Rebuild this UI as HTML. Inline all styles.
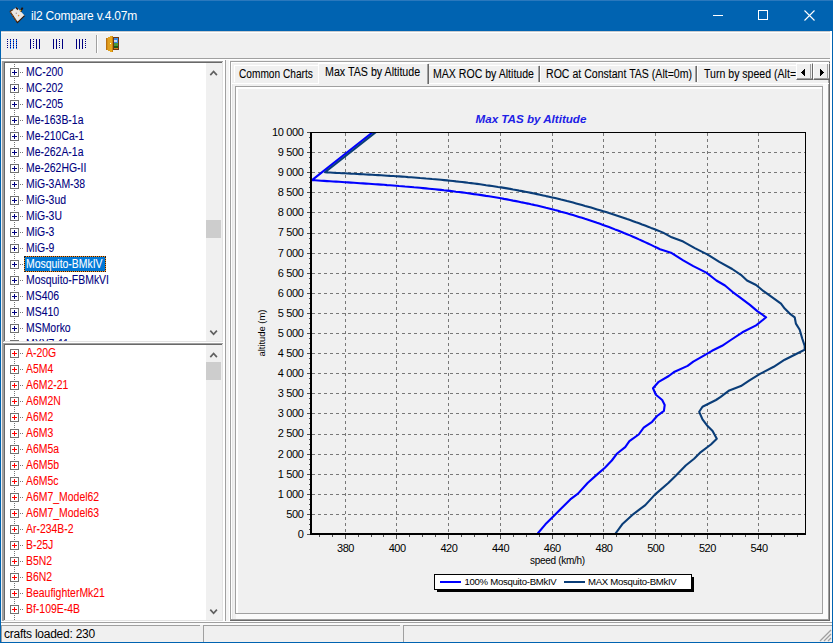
<!DOCTYPE html>
<html><head><meta charset="utf-8"><style>
html,body{margin:0;padding:0;}
body{width:833px;height:643px;overflow:hidden;background:#f0f0f0;position:relative;font-family:"Liberation Sans", sans-serif;}
div,svg{position:absolute;}
svg text{font-family:"Liberation Sans", sans-serif;}
</style></head><body>
<div style="left:0px;top:0px;width:833px;height:31px;background:#0063b1;"></div><div style="left:0px;top:0px;width:833px;height:1px;background:#2a78bd;"></div><div style="left:0px;top:31px;width:1px;height:612px;background:#0063b1;"></div><div style="left:832px;top:31px;width:1px;height:612px;background:#0063b1;"></div><div style="left:0px;top:642px;width:833px;height:1px;background:#0063b1;"></div><svg style="left:0;top:0" width="31" height="31" viewBox="0 0 31 31">
<polygon points="10,11.5 16.8,7.2 24.6,15.6 17.4,22.6" fill="#ebe7e3"/>
<polyline points="24.6,15.6 17.4,22.6 10,11.5" fill="none" stroke="#3a1a06" stroke-width="1.3"/>
<line x1="10.3" y1="12" x2="17" y2="21.8" stroke="#c87a30" stroke-width="1" stroke-dasharray="1 1"/>
<polyline points="10,11.5 13,9.4" fill="none" stroke="#5a3010" stroke-width="1.2"/>
<line x1="16" y1="7.5" x2="18" y2="9.6" stroke="#2a1004" stroke-width="1.6"/>
<line x1="20.6" y1="11.5" x2="22.6" y2="7.6" stroke="#2a1004" stroke-width="1.8"/>
<circle cx="20.5" cy="10.6" r="0.9" fill="#e8b030"/>
<circle cx="18.6" cy="15.6" r="0.8" fill="#e08a30"/>
<circle cx="16.3" cy="13.2" r="0.7" fill="#a09090"/>
</svg><div style="left:31px;top:10.14px;font-size:12px;line-height:12px;color:#fff;letter-spacing:-0.2px;font-weight:normal;font-style:normal;white-space:pre;">il2 Compare v.4.07m</div><div style="left:713px;top:15px;width:10px;height:1px;background:#fff;"></div><div style="left:758px;top:10px;width:8px;height:8px;border:1px solid #fff"></div><svg style="left:804px;top:10px" width="11" height="11" viewBox="0 0 11 11">
<path d="M0.5 0.5 L10.5 10.5 M10.5 0.5 L0.5 10.5" stroke="#fff" stroke-width="1.1"/></svg><div style="left:1px;top:31px;width:831px;height:1px;background:#c8ccd0;"></div><div style="left:1px;top:32px;width:831px;height:1px;background:#ffffff;"></div><div style="left:1px;top:58px;width:831px;height:1px;background:#a0a0a0;"></div><div style="left:1px;top:60px;width:224px;height:1px;background:#ffffff;"></div><div style="left:1px;top:59px;width:831px;height:1px;background:#ffffff;"></div><div style="left:7px;top:39px;width:1px;height:1px;background:#000080;"></div><div style="left:7px;top:41px;width:1px;height:1px;background:#000080;"></div><div style="left:7px;top:43px;width:1px;height:1px;background:#000080;"></div><div style="left:7px;top:45px;width:1px;height:1px;background:#000080;"></div><div style="left:7px;top:47px;width:1px;height:1px;background:#000080;"></div><div style="left:10px;top:39px;width:1px;height:1px;background:#000080;"></div><div style="left:10px;top:40px;width:1px;height:1px;background:#1e90ff;"></div><div style="left:10px;top:41px;width:1px;height:1px;background:#000080;"></div><div style="left:10px;top:42px;width:1px;height:1px;background:#1e90ff;"></div><div style="left:10px;top:43px;width:1px;height:1px;background:#000080;"></div><div style="left:10px;top:44px;width:1px;height:1px;background:#1e90ff;"></div><div style="left:10px;top:45px;width:1px;height:1px;background:#000080;"></div><div style="left:10px;top:46px;width:1px;height:1px;background:#1e90ff;"></div><div style="left:10px;top:47px;width:1px;height:1px;background:#000080;"></div><div style="left:10px;top:48px;width:1px;height:1px;background:#1e90ff;"></div><div style="left:13px;top:39px;width:1px;height:1px;background:#000080;"></div><div style="left:13px;top:40px;width:1px;height:1px;background:#1e90ff;"></div><div style="left:13px;top:41px;width:1px;height:1px;background:#000080;"></div><div style="left:13px;top:42px;width:1px;height:1px;background:#1e90ff;"></div><div style="left:13px;top:43px;width:1px;height:1px;background:#000080;"></div><div style="left:13px;top:44px;width:1px;height:1px;background:#1e90ff;"></div><div style="left:13px;top:45px;width:1px;height:1px;background:#000080;"></div><div style="left:13px;top:46px;width:1px;height:1px;background:#1e90ff;"></div><div style="left:13px;top:47px;width:1px;height:1px;background:#000080;"></div><div style="left:13px;top:48px;width:1px;height:1px;background:#1e90ff;"></div><div style="left:16px;top:39px;width:1px;height:1px;background:#000080;"></div><div style="left:16px;top:40px;width:1px;height:1px;background:#1e90ff;"></div><div style="left:16px;top:41px;width:1px;height:1px;background:#000080;"></div><div style="left:16px;top:42px;width:1px;height:1px;background:#1e90ff;"></div><div style="left:16px;top:43px;width:1px;height:1px;background:#000080;"></div><div style="left:16px;top:44px;width:1px;height:1px;background:#1e90ff;"></div><div style="left:16px;top:45px;width:1px;height:1px;background:#000080;"></div><div style="left:16px;top:46px;width:1px;height:1px;background:#1e90ff;"></div><div style="left:16px;top:47px;width:1px;height:1px;background:#000080;"></div><div style="left:16px;top:48px;width:1px;height:1px;background:#1e90ff;"></div><div style="left:30px;top:39px;width:1px;height:10px;background:#000080;"></div><div style="left:33px;top:39px;width:1px;height:1px;background:#000080;"></div><div style="left:33px;top:41px;width:1px;height:1px;background:#000080;"></div><div style="left:33px;top:43px;width:1px;height:1px;background:#000080;"></div><div style="left:33px;top:45px;width:1px;height:1px;background:#000080;"></div><div style="left:33px;top:47px;width:1px;height:1px;background:#000080;"></div><div style="left:36px;top:39px;width:1px;height:10px;background:#000080;"></div><div style="left:39px;top:39px;width:1px;height:10px;background:#000080;"></div><div style="left:53px;top:39px;width:1px;height:10px;background:#000080;"></div><div style="left:56px;top:39px;width:1px;height:10px;background:#000080;"></div><div style="left:59px;top:39px;width:1px;height:1px;background:#000080;"></div><div style="left:59px;top:41px;width:1px;height:1px;background:#000080;"></div><div style="left:59px;top:43px;width:1px;height:1px;background:#000080;"></div><div style="left:59px;top:45px;width:1px;height:1px;background:#000080;"></div><div style="left:59px;top:47px;width:1px;height:1px;background:#000080;"></div><div style="left:62px;top:39px;width:1px;height:10px;background:#000080;"></div><div style="left:76px;top:39px;width:1px;height:10px;background:#000080;"></div><div style="left:79px;top:39px;width:1px;height:10px;background:#000080;"></div><div style="left:82px;top:39px;width:1px;height:10px;background:#000080;"></div><div style="left:85px;top:39px;width:1px;height:1px;background:#000080;"></div><div style="left:85px;top:41px;width:1px;height:1px;background:#000080;"></div><div style="left:85px;top:43px;width:1px;height:1px;background:#000080;"></div><div style="left:85px;top:45px;width:1px;height:1px;background:#000080;"></div><div style="left:85px;top:47px;width:1px;height:1px;background:#000080;"></div><div style="left:96px;top:35px;width:1px;height:18px;background:#a0a0a0;"></div><div style="left:97px;top:35px;width:1px;height:18px;background:#ffffff;"></div><svg style="left:100px;top:32px" width="25" height="24" viewBox="0 0 25 24" shape-rendering="crispEdges">
<rect x="13" y="5" width="6" height="13" fill="#6e3812"/>
<rect x="14" y="6" width="4" height="5" fill="#3a88e8"/>
<rect x="14" y="8" width="3" height="2" fill="#c8dcf0"/>
<rect x="14" y="11" width="4" height="3" fill="#4a9a3a"/>
<rect x="14" y="14" width="4" height="2" fill="#1e5a18"/>
<rect x="14" y="16" width="4" height="1" fill="#d08020"/>
<rect x="6" y="6" width="2" height="12" fill="#d89018"/>
<rect x="8" y="5" width="2" height="14" fill="#e0a020"/>
<rect x="10" y="4" width="3" height="16" fill="#e8a81c"/>
<rect x="6" y="6" width="1" height="12" fill="#b87010"/>
<rect x="12" y="4" width="1" height="16" fill="#c88010"/>
<rect x="10" y="11" width="1" height="1" fill="#fff"/>
</svg><div style="left:225px;top:60px;width:1px;height:563px;background:#a0a0a0;"></div><div style="left:226px;top:60px;width:3px;height:563px;background:#f5f5f5;"></div><div style="left:229px;top:60px;width:1px;height:563px;background:#ffffff;"></div><div style="left:2px;top:61px;width:1px;height:282px;background:#a0a0a0;"></div><div style="left:3px;top:61px;width:222px;height:282px;background:#ffffff;"></div><div style="left:3px;top:61px;width:221px;height:1px;background:#a0a0a0;"></div><div style="left:3px;top:61px;width:1px;height:282px;background:#a0a0a0;"></div><div style="left:4px;top:62px;width:219px;height:1px;background:#696969;"></div><div style="left:4px;top:62px;width:1px;height:280px;background:#696969;"></div><div style="left:3px;top:342px;width:221px;height:1px;background:#ffffff;"></div><div style="left:223px;top:61px;width:1px;height:282px;background:#ffffff;"></div><div style="left:4px;top:341px;width:219px;height:1px;background:#e3e3e3;"></div><div style="left:222px;top:62px;width:1px;height:280px;background:#e3e3e3;"></div><div style="left:5px;top:63px;width:217px;height:278px;overflow:hidden;background:#fff"><div style="left:9px;top:1px;width:1px;height:1px;background:#767676;"></div><div style="left:9px;top:3px;width:1px;height:1px;background:#767676;"></div><div style="left:9px;top:5px;width:1px;height:1px;background:#767676;"></div><div style="left:9px;top:7px;width:1px;height:1px;background:#767676;"></div><div style="left:9px;top:9px;width:1px;height:1px;background:#767676;"></div><div style="left:9px;top:11px;width:1px;height:1px;background:#767676;"></div><div style="left:9px;top:13px;width:1px;height:1px;background:#767676;"></div><div style="left:9px;top:15px;width:1px;height:1px;background:#767676;"></div><div style="left:9px;top:17px;width:1px;height:1px;background:#767676;"></div><div style="left:9px;top:19px;width:1px;height:1px;background:#767676;"></div><div style="left:9px;top:21px;width:1px;height:1px;background:#767676;"></div><div style="left:9px;top:23px;width:1px;height:1px;background:#767676;"></div><div style="left:9px;top:25px;width:1px;height:1px;background:#767676;"></div><div style="left:9px;top:27px;width:1px;height:1px;background:#767676;"></div><div style="left:9px;top:29px;width:1px;height:1px;background:#767676;"></div><div style="left:9px;top:31px;width:1px;height:1px;background:#767676;"></div><div style="left:9px;top:33px;width:1px;height:1px;background:#767676;"></div><div style="left:9px;top:35px;width:1px;height:1px;background:#767676;"></div><div style="left:9px;top:37px;width:1px;height:1px;background:#767676;"></div><div style="left:9px;top:39px;width:1px;height:1px;background:#767676;"></div><div style="left:9px;top:41px;width:1px;height:1px;background:#767676;"></div><div style="left:9px;top:43px;width:1px;height:1px;background:#767676;"></div><div style="left:9px;top:45px;width:1px;height:1px;background:#767676;"></div><div style="left:9px;top:47px;width:1px;height:1px;background:#767676;"></div><div style="left:9px;top:49px;width:1px;height:1px;background:#767676;"></div><div style="left:9px;top:51px;width:1px;height:1px;background:#767676;"></div><div style="left:9px;top:53px;width:1px;height:1px;background:#767676;"></div><div style="left:9px;top:55px;width:1px;height:1px;background:#767676;"></div><div style="left:9px;top:57px;width:1px;height:1px;background:#767676;"></div><div style="left:9px;top:59px;width:1px;height:1px;background:#767676;"></div><div style="left:9px;top:61px;width:1px;height:1px;background:#767676;"></div><div style="left:9px;top:63px;width:1px;height:1px;background:#767676;"></div><div style="left:9px;top:65px;width:1px;height:1px;background:#767676;"></div><div style="left:9px;top:67px;width:1px;height:1px;background:#767676;"></div><div style="left:9px;top:69px;width:1px;height:1px;background:#767676;"></div><div style="left:9px;top:71px;width:1px;height:1px;background:#767676;"></div><div style="left:9px;top:73px;width:1px;height:1px;background:#767676;"></div><div style="left:9px;top:75px;width:1px;height:1px;background:#767676;"></div><div style="left:9px;top:77px;width:1px;height:1px;background:#767676;"></div><div style="left:9px;top:79px;width:1px;height:1px;background:#767676;"></div><div style="left:9px;top:81px;width:1px;height:1px;background:#767676;"></div><div style="left:9px;top:83px;width:1px;height:1px;background:#767676;"></div><div style="left:9px;top:85px;width:1px;height:1px;background:#767676;"></div><div style="left:9px;top:87px;width:1px;height:1px;background:#767676;"></div><div style="left:9px;top:89px;width:1px;height:1px;background:#767676;"></div><div style="left:9px;top:91px;width:1px;height:1px;background:#767676;"></div><div style="left:9px;top:93px;width:1px;height:1px;background:#767676;"></div><div style="left:9px;top:95px;width:1px;height:1px;background:#767676;"></div><div style="left:9px;top:97px;width:1px;height:1px;background:#767676;"></div><div style="left:9px;top:99px;width:1px;height:1px;background:#767676;"></div><div style="left:9px;top:101px;width:1px;height:1px;background:#767676;"></div><div style="left:9px;top:103px;width:1px;height:1px;background:#767676;"></div><div style="left:9px;top:105px;width:1px;height:1px;background:#767676;"></div><div style="left:9px;top:107px;width:1px;height:1px;background:#767676;"></div><div style="left:9px;top:109px;width:1px;height:1px;background:#767676;"></div><div style="left:9px;top:111px;width:1px;height:1px;background:#767676;"></div><div style="left:9px;top:113px;width:1px;height:1px;background:#767676;"></div><div style="left:9px;top:115px;width:1px;height:1px;background:#767676;"></div><div style="left:9px;top:117px;width:1px;height:1px;background:#767676;"></div><div style="left:9px;top:119px;width:1px;height:1px;background:#767676;"></div><div style="left:9px;top:121px;width:1px;height:1px;background:#767676;"></div><div style="left:9px;top:123px;width:1px;height:1px;background:#767676;"></div><div style="left:9px;top:125px;width:1px;height:1px;background:#767676;"></div><div style="left:9px;top:127px;width:1px;height:1px;background:#767676;"></div><div style="left:9px;top:129px;width:1px;height:1px;background:#767676;"></div><div style="left:9px;top:131px;width:1px;height:1px;background:#767676;"></div><div style="left:9px;top:133px;width:1px;height:1px;background:#767676;"></div><div style="left:9px;top:135px;width:1px;height:1px;background:#767676;"></div><div style="left:9px;top:137px;width:1px;height:1px;background:#767676;"></div><div style="left:9px;top:139px;width:1px;height:1px;background:#767676;"></div><div style="left:9px;top:141px;width:1px;height:1px;background:#767676;"></div><div style="left:9px;top:143px;width:1px;height:1px;background:#767676;"></div><div style="left:9px;top:145px;width:1px;height:1px;background:#767676;"></div><div style="left:9px;top:147px;width:1px;height:1px;background:#767676;"></div><div style="left:9px;top:149px;width:1px;height:1px;background:#767676;"></div><div style="left:9px;top:151px;width:1px;height:1px;background:#767676;"></div><div style="left:9px;top:153px;width:1px;height:1px;background:#767676;"></div><div style="left:9px;top:155px;width:1px;height:1px;background:#767676;"></div><div style="left:9px;top:157px;width:1px;height:1px;background:#767676;"></div><div style="left:9px;top:159px;width:1px;height:1px;background:#767676;"></div><div style="left:9px;top:161px;width:1px;height:1px;background:#767676;"></div><div style="left:9px;top:163px;width:1px;height:1px;background:#767676;"></div><div style="left:9px;top:165px;width:1px;height:1px;background:#767676;"></div><div style="left:9px;top:167px;width:1px;height:1px;background:#767676;"></div><div style="left:9px;top:169px;width:1px;height:1px;background:#767676;"></div><div style="left:9px;top:171px;width:1px;height:1px;background:#767676;"></div><div style="left:9px;top:173px;width:1px;height:1px;background:#767676;"></div><div style="left:9px;top:175px;width:1px;height:1px;background:#767676;"></div><div style="left:9px;top:177px;width:1px;height:1px;background:#767676;"></div><div style="left:9px;top:179px;width:1px;height:1px;background:#767676;"></div><div style="left:9px;top:181px;width:1px;height:1px;background:#767676;"></div><div style="left:9px;top:183px;width:1px;height:1px;background:#767676;"></div><div style="left:9px;top:185px;width:1px;height:1px;background:#767676;"></div><div style="left:9px;top:187px;width:1px;height:1px;background:#767676;"></div><div style="left:9px;top:189px;width:1px;height:1px;background:#767676;"></div><div style="left:9px;top:191px;width:1px;height:1px;background:#767676;"></div><div style="left:9px;top:193px;width:1px;height:1px;background:#767676;"></div><div style="left:9px;top:195px;width:1px;height:1px;background:#767676;"></div><div style="left:9px;top:197px;width:1px;height:1px;background:#767676;"></div><div style="left:9px;top:199px;width:1px;height:1px;background:#767676;"></div><div style="left:9px;top:201px;width:1px;height:1px;background:#767676;"></div><div style="left:9px;top:203px;width:1px;height:1px;background:#767676;"></div><div style="left:9px;top:205px;width:1px;height:1px;background:#767676;"></div><div style="left:9px;top:207px;width:1px;height:1px;background:#767676;"></div><div style="left:9px;top:209px;width:1px;height:1px;background:#767676;"></div><div style="left:9px;top:211px;width:1px;height:1px;background:#767676;"></div><div style="left:9px;top:213px;width:1px;height:1px;background:#767676;"></div><div style="left:9px;top:215px;width:1px;height:1px;background:#767676;"></div><div style="left:9px;top:217px;width:1px;height:1px;background:#767676;"></div><div style="left:9px;top:219px;width:1px;height:1px;background:#767676;"></div><div style="left:9px;top:221px;width:1px;height:1px;background:#767676;"></div><div style="left:9px;top:223px;width:1px;height:1px;background:#767676;"></div><div style="left:9px;top:225px;width:1px;height:1px;background:#767676;"></div><div style="left:9px;top:227px;width:1px;height:1px;background:#767676;"></div><div style="left:9px;top:229px;width:1px;height:1px;background:#767676;"></div><div style="left:9px;top:231px;width:1px;height:1px;background:#767676;"></div><div style="left:9px;top:233px;width:1px;height:1px;background:#767676;"></div><div style="left:9px;top:235px;width:1px;height:1px;background:#767676;"></div><div style="left:9px;top:237px;width:1px;height:1px;background:#767676;"></div><div style="left:9px;top:239px;width:1px;height:1px;background:#767676;"></div><div style="left:9px;top:241px;width:1px;height:1px;background:#767676;"></div><div style="left:9px;top:243px;width:1px;height:1px;background:#767676;"></div><div style="left:9px;top:245px;width:1px;height:1px;background:#767676;"></div><div style="left:9px;top:247px;width:1px;height:1px;background:#767676;"></div><div style="left:9px;top:249px;width:1px;height:1px;background:#767676;"></div><div style="left:9px;top:251px;width:1px;height:1px;background:#767676;"></div><div style="left:9px;top:253px;width:1px;height:1px;background:#767676;"></div><div style="left:9px;top:255px;width:1px;height:1px;background:#767676;"></div><div style="left:9px;top:257px;width:1px;height:1px;background:#767676;"></div><div style="left:9px;top:259px;width:1px;height:1px;background:#767676;"></div><div style="left:9px;top:261px;width:1px;height:1px;background:#767676;"></div><div style="left:9px;top:263px;width:1px;height:1px;background:#767676;"></div><div style="left:9px;top:265px;width:1px;height:1px;background:#767676;"></div><div style="left:9px;top:267px;width:1px;height:1px;background:#767676;"></div><div style="left:9px;top:269px;width:1px;height:1px;background:#767676;"></div><div style="left:9px;top:271px;width:1px;height:1px;background:#767676;"></div><div style="left:9px;top:273px;width:1px;height:1px;background:#767676;"></div><div style="left:9px;top:275px;width:1px;height:1px;background:#767676;"></div><div style="left:9px;top:277px;width:1px;height:1px;background:#767676;"></div><div style="left:15px;top:9px;width:1px;height:1px;background:#767676;"></div><div style="left:17px;top:9px;width:1px;height:1px;background:#767676;"></div><div style="left:5px;top:5px;width:9px;height:9px;background:#fff;box-sizing:border-box;border:1px solid #727272"></div><div style="left:7px;top:9px;width:5px;height:1px;background:#000080;"></div><div style="left:9px;top:7px;width:1px;height:5px;background:#000080;"></div><div style="left:21px;top:2.84px;font-size:12px;line-height:12px;color:#000080;letter-spacing:0px;white-space:pre;transform:scaleX(0.87);transform-origin:0 0;-webkit-text-stroke:0.08px #000080">MC-200</div><div style="left:15px;top:25px;width:1px;height:1px;background:#767676;"></div><div style="left:17px;top:25px;width:1px;height:1px;background:#767676;"></div><div style="left:5px;top:21px;width:9px;height:9px;background:#fff;box-sizing:border-box;border:1px solid #727272"></div><div style="left:7px;top:25px;width:5px;height:1px;background:#000080;"></div><div style="left:9px;top:23px;width:1px;height:5px;background:#000080;"></div><div style="left:21px;top:18.84px;font-size:12px;line-height:12px;color:#000080;letter-spacing:0px;white-space:pre;transform:scaleX(0.87);transform-origin:0 0;-webkit-text-stroke:0.08px #000080">MC-202</div><div style="left:15px;top:41px;width:1px;height:1px;background:#767676;"></div><div style="left:17px;top:41px;width:1px;height:1px;background:#767676;"></div><div style="left:5px;top:37px;width:9px;height:9px;background:#fff;box-sizing:border-box;border:1px solid #727272"></div><div style="left:7px;top:41px;width:5px;height:1px;background:#000080;"></div><div style="left:9px;top:39px;width:1px;height:5px;background:#000080;"></div><div style="left:21px;top:34.84px;font-size:12px;line-height:12px;color:#000080;letter-spacing:0px;white-space:pre;transform:scaleX(0.87);transform-origin:0 0;-webkit-text-stroke:0.08px #000080">MC-205</div><div style="left:15px;top:57px;width:1px;height:1px;background:#767676;"></div><div style="left:17px;top:57px;width:1px;height:1px;background:#767676;"></div><div style="left:5px;top:53px;width:9px;height:9px;background:#fff;box-sizing:border-box;border:1px solid #727272"></div><div style="left:7px;top:57px;width:5px;height:1px;background:#000080;"></div><div style="left:9px;top:55px;width:1px;height:5px;background:#000080;"></div><div style="left:21px;top:50.84px;font-size:12px;line-height:12px;color:#000080;letter-spacing:0px;white-space:pre;transform:scaleX(0.87);transform-origin:0 0;-webkit-text-stroke:0.08px #000080">Me-163B-1a</div><div style="left:15px;top:73px;width:1px;height:1px;background:#767676;"></div><div style="left:17px;top:73px;width:1px;height:1px;background:#767676;"></div><div style="left:5px;top:69px;width:9px;height:9px;background:#fff;box-sizing:border-box;border:1px solid #727272"></div><div style="left:7px;top:73px;width:5px;height:1px;background:#000080;"></div><div style="left:9px;top:71px;width:1px;height:5px;background:#000080;"></div><div style="left:21px;top:66.84px;font-size:12px;line-height:12px;color:#000080;letter-spacing:0px;white-space:pre;transform:scaleX(0.87);transform-origin:0 0;-webkit-text-stroke:0.08px #000080">Me-210Ca-1</div><div style="left:15px;top:89px;width:1px;height:1px;background:#767676;"></div><div style="left:17px;top:89px;width:1px;height:1px;background:#767676;"></div><div style="left:5px;top:85px;width:9px;height:9px;background:#fff;box-sizing:border-box;border:1px solid #727272"></div><div style="left:7px;top:89px;width:5px;height:1px;background:#000080;"></div><div style="left:9px;top:87px;width:1px;height:5px;background:#000080;"></div><div style="left:21px;top:82.84px;font-size:12px;line-height:12px;color:#000080;letter-spacing:0px;white-space:pre;transform:scaleX(0.87);transform-origin:0 0;-webkit-text-stroke:0.08px #000080">Me-262A-1a</div><div style="left:15px;top:105px;width:1px;height:1px;background:#767676;"></div><div style="left:17px;top:105px;width:1px;height:1px;background:#767676;"></div><div style="left:5px;top:101px;width:9px;height:9px;background:#fff;box-sizing:border-box;border:1px solid #727272"></div><div style="left:7px;top:105px;width:5px;height:1px;background:#000080;"></div><div style="left:9px;top:103px;width:1px;height:5px;background:#000080;"></div><div style="left:21px;top:98.84px;font-size:12px;line-height:12px;color:#000080;letter-spacing:0px;white-space:pre;transform:scaleX(0.87);transform-origin:0 0;-webkit-text-stroke:0.08px #000080">Me-262HG-II</div><div style="left:15px;top:121px;width:1px;height:1px;background:#767676;"></div><div style="left:17px;top:121px;width:1px;height:1px;background:#767676;"></div><div style="left:5px;top:117px;width:9px;height:9px;background:#fff;box-sizing:border-box;border:1px solid #727272"></div><div style="left:7px;top:121px;width:5px;height:1px;background:#000080;"></div><div style="left:9px;top:119px;width:1px;height:5px;background:#000080;"></div><div style="left:21px;top:114.84px;font-size:12px;line-height:12px;color:#000080;letter-spacing:0px;white-space:pre;transform:scaleX(0.87);transform-origin:0 0;-webkit-text-stroke:0.08px #000080">MiG-3AM-38</div><div style="left:15px;top:137px;width:1px;height:1px;background:#767676;"></div><div style="left:17px;top:137px;width:1px;height:1px;background:#767676;"></div><div style="left:5px;top:133px;width:9px;height:9px;background:#fff;box-sizing:border-box;border:1px solid #727272"></div><div style="left:7px;top:137px;width:5px;height:1px;background:#000080;"></div><div style="left:9px;top:135px;width:1px;height:5px;background:#000080;"></div><div style="left:21px;top:130.84px;font-size:12px;line-height:12px;color:#000080;letter-spacing:0px;white-space:pre;transform:scaleX(0.87);transform-origin:0 0;-webkit-text-stroke:0.08px #000080">MiG-3ud</div><div style="left:15px;top:153px;width:1px;height:1px;background:#767676;"></div><div style="left:17px;top:153px;width:1px;height:1px;background:#767676;"></div><div style="left:5px;top:149px;width:9px;height:9px;background:#fff;box-sizing:border-box;border:1px solid #727272"></div><div style="left:7px;top:153px;width:5px;height:1px;background:#000080;"></div><div style="left:9px;top:151px;width:1px;height:5px;background:#000080;"></div><div style="left:21px;top:146.84px;font-size:12px;line-height:12px;color:#000080;letter-spacing:0px;white-space:pre;transform:scaleX(0.87);transform-origin:0 0;-webkit-text-stroke:0.08px #000080">MiG-3U</div><div style="left:15px;top:169px;width:1px;height:1px;background:#767676;"></div><div style="left:17px;top:169px;width:1px;height:1px;background:#767676;"></div><div style="left:5px;top:165px;width:9px;height:9px;background:#fff;box-sizing:border-box;border:1px solid #727272"></div><div style="left:7px;top:169px;width:5px;height:1px;background:#000080;"></div><div style="left:9px;top:167px;width:1px;height:5px;background:#000080;"></div><div style="left:21px;top:162.84px;font-size:12px;line-height:12px;color:#000080;letter-spacing:0px;white-space:pre;transform:scaleX(0.87);transform-origin:0 0;-webkit-text-stroke:0.08px #000080">MiG-3</div><div style="left:15px;top:185px;width:1px;height:1px;background:#767676;"></div><div style="left:17px;top:185px;width:1px;height:1px;background:#767676;"></div><div style="left:5px;top:181px;width:9px;height:9px;background:#fff;box-sizing:border-box;border:1px solid #727272"></div><div style="left:7px;top:185px;width:5px;height:1px;background:#000080;"></div><div style="left:9px;top:183px;width:1px;height:5px;background:#000080;"></div><div style="left:21px;top:178.84px;font-size:12px;line-height:12px;color:#000080;letter-spacing:0px;white-space:pre;transform:scaleX(0.87);transform-origin:0 0;-webkit-text-stroke:0.08px #000080">MiG-9</div><div style="left:15px;top:201px;width:1px;height:1px;background:#767676;"></div><div style="left:17px;top:201px;width:1px;height:1px;background:#767676;"></div><div style="left:5px;top:197px;width:9px;height:9px;background:#fff;box-sizing:border-box;border:1px solid #727272"></div><div style="left:7px;top:201px;width:5px;height:1px;background:#000080;"></div><div style="left:9px;top:199px;width:1px;height:5px;background:#000080;"></div><div style="left:19px;top:193px;width:82px;height:16px;background:#ff9020;box-sizing:border-box;border:1px dotted #202020"></div><div style="left:20px;top:194px;width:80px;height:14px;background:#0078d7;"></div><div style="left:21px;top:194.84px;font-size:12px;line-height:12px;color:#fff;letter-spacing:0px;white-space:pre;transform:scaleX(0.87);transform-origin:0 0;-webkit-text-stroke:0.08px #fff">Mosquito-BMkIV</div><div style="left:15px;top:217px;width:1px;height:1px;background:#767676;"></div><div style="left:17px;top:217px;width:1px;height:1px;background:#767676;"></div><div style="left:5px;top:213px;width:9px;height:9px;background:#fff;box-sizing:border-box;border:1px solid #727272"></div><div style="left:7px;top:217px;width:5px;height:1px;background:#000080;"></div><div style="left:9px;top:215px;width:1px;height:5px;background:#000080;"></div><div style="left:21px;top:210.84px;font-size:12px;line-height:12px;color:#000080;letter-spacing:0px;white-space:pre;transform:scaleX(0.87);transform-origin:0 0;-webkit-text-stroke:0.08px #000080">Mosquito-FBMkVI</div><div style="left:15px;top:233px;width:1px;height:1px;background:#767676;"></div><div style="left:17px;top:233px;width:1px;height:1px;background:#767676;"></div><div style="left:5px;top:229px;width:9px;height:9px;background:#fff;box-sizing:border-box;border:1px solid #727272"></div><div style="left:7px;top:233px;width:5px;height:1px;background:#000080;"></div><div style="left:9px;top:231px;width:1px;height:5px;background:#000080;"></div><div style="left:21px;top:226.84px;font-size:12px;line-height:12px;color:#000080;letter-spacing:0px;white-space:pre;transform:scaleX(0.87);transform-origin:0 0;-webkit-text-stroke:0.08px #000080">MS406</div><div style="left:15px;top:249px;width:1px;height:1px;background:#767676;"></div><div style="left:17px;top:249px;width:1px;height:1px;background:#767676;"></div><div style="left:5px;top:245px;width:9px;height:9px;background:#fff;box-sizing:border-box;border:1px solid #727272"></div><div style="left:7px;top:249px;width:5px;height:1px;background:#000080;"></div><div style="left:9px;top:247px;width:1px;height:5px;background:#000080;"></div><div style="left:21px;top:242.84px;font-size:12px;line-height:12px;color:#000080;letter-spacing:0px;white-space:pre;transform:scaleX(0.87);transform-origin:0 0;-webkit-text-stroke:0.08px #000080">MS410</div><div style="left:15px;top:265px;width:1px;height:1px;background:#767676;"></div><div style="left:17px;top:265px;width:1px;height:1px;background:#767676;"></div><div style="left:5px;top:261px;width:9px;height:9px;background:#fff;box-sizing:border-box;border:1px solid #727272"></div><div style="left:7px;top:265px;width:5px;height:1px;background:#000080;"></div><div style="left:9px;top:263px;width:1px;height:5px;background:#000080;"></div><div style="left:21px;top:258.84px;font-size:12px;line-height:12px;color:#000080;letter-spacing:0px;white-space:pre;transform:scaleX(0.87);transform-origin:0 0;-webkit-text-stroke:0.08px #000080">MSMorko</div><div style="left:15px;top:281px;width:1px;height:1px;background:#767676;"></div><div style="left:17px;top:281px;width:1px;height:1px;background:#767676;"></div><div style="left:5px;top:277px;width:9px;height:9px;background:#fff;box-sizing:border-box;border:1px solid #727272"></div><div style="left:7px;top:281px;width:5px;height:1px;background:#000080;"></div><div style="left:9px;top:279px;width:1px;height:5px;background:#000080;"></div><div style="left:21px;top:274.84px;font-size:12px;line-height:12px;color:#000080;letter-spacing:0px;white-space:pre;transform:scaleX(0.87);transform-origin:0 0;-webkit-text-stroke:0.08px #000080">MXY7-11</div><div style="left:201px;top:0px;width:16px;height:278px;background:#f0f0f0;"></div><div style="left:201px;top:157px;width:15px;height:18px;background:#cdcdcd;"></div></div><svg style="left:0;top:0" width="833" height="643"><path d="M210.3 75.1 L213.6 71.5 L216.9 75.1" fill="none" stroke="#606060" stroke-width="1.7"/><path d="M210.3 330.59999999999997 L213.6 334.2 L216.9 330.59999999999997" fill="none" stroke="#606060" stroke-width="1.7"/></svg><div style="left:2px;top:343px;width:1px;height:279px;background:#a0a0a0;"></div><div style="left:3px;top:343px;width:222px;height:279px;background:#ffffff;"></div><div style="left:3px;top:343px;width:221px;height:1px;background:#a0a0a0;"></div><div style="left:3px;top:343px;width:1px;height:279px;background:#a0a0a0;"></div><div style="left:4px;top:344px;width:219px;height:1px;background:#696969;"></div><div style="left:4px;top:344px;width:1px;height:277px;background:#696969;"></div><div style="left:3px;top:621px;width:221px;height:1px;background:#ffffff;"></div><div style="left:223px;top:343px;width:1px;height:279px;background:#ffffff;"></div><div style="left:4px;top:620px;width:219px;height:1px;background:#e3e3e3;"></div><div style="left:222px;top:344px;width:1px;height:277px;background:#e3e3e3;"></div><div style="left:5px;top:345px;width:217px;height:275px;overflow:hidden;background:#fff"><div style="left:9px;top:4px;width:1px;height:1px;background:#767676;"></div><div style="left:9px;top:6px;width:1px;height:1px;background:#767676;"></div><div style="left:9px;top:8px;width:1px;height:1px;background:#767676;"></div><div style="left:9px;top:10px;width:1px;height:1px;background:#767676;"></div><div style="left:9px;top:12px;width:1px;height:1px;background:#767676;"></div><div style="left:9px;top:14px;width:1px;height:1px;background:#767676;"></div><div style="left:9px;top:16px;width:1px;height:1px;background:#767676;"></div><div style="left:9px;top:18px;width:1px;height:1px;background:#767676;"></div><div style="left:9px;top:20px;width:1px;height:1px;background:#767676;"></div><div style="left:9px;top:22px;width:1px;height:1px;background:#767676;"></div><div style="left:9px;top:24px;width:1px;height:1px;background:#767676;"></div><div style="left:9px;top:26px;width:1px;height:1px;background:#767676;"></div><div style="left:9px;top:28px;width:1px;height:1px;background:#767676;"></div><div style="left:9px;top:30px;width:1px;height:1px;background:#767676;"></div><div style="left:9px;top:32px;width:1px;height:1px;background:#767676;"></div><div style="left:9px;top:34px;width:1px;height:1px;background:#767676;"></div><div style="left:9px;top:36px;width:1px;height:1px;background:#767676;"></div><div style="left:9px;top:38px;width:1px;height:1px;background:#767676;"></div><div style="left:9px;top:40px;width:1px;height:1px;background:#767676;"></div><div style="left:9px;top:42px;width:1px;height:1px;background:#767676;"></div><div style="left:9px;top:44px;width:1px;height:1px;background:#767676;"></div><div style="left:9px;top:46px;width:1px;height:1px;background:#767676;"></div><div style="left:9px;top:48px;width:1px;height:1px;background:#767676;"></div><div style="left:9px;top:50px;width:1px;height:1px;background:#767676;"></div><div style="left:9px;top:52px;width:1px;height:1px;background:#767676;"></div><div style="left:9px;top:54px;width:1px;height:1px;background:#767676;"></div><div style="left:9px;top:56px;width:1px;height:1px;background:#767676;"></div><div style="left:9px;top:58px;width:1px;height:1px;background:#767676;"></div><div style="left:9px;top:60px;width:1px;height:1px;background:#767676;"></div><div style="left:9px;top:62px;width:1px;height:1px;background:#767676;"></div><div style="left:9px;top:64px;width:1px;height:1px;background:#767676;"></div><div style="left:9px;top:66px;width:1px;height:1px;background:#767676;"></div><div style="left:9px;top:68px;width:1px;height:1px;background:#767676;"></div><div style="left:9px;top:70px;width:1px;height:1px;background:#767676;"></div><div style="left:9px;top:72px;width:1px;height:1px;background:#767676;"></div><div style="left:9px;top:74px;width:1px;height:1px;background:#767676;"></div><div style="left:9px;top:76px;width:1px;height:1px;background:#767676;"></div><div style="left:9px;top:78px;width:1px;height:1px;background:#767676;"></div><div style="left:9px;top:80px;width:1px;height:1px;background:#767676;"></div><div style="left:9px;top:82px;width:1px;height:1px;background:#767676;"></div><div style="left:9px;top:84px;width:1px;height:1px;background:#767676;"></div><div style="left:9px;top:86px;width:1px;height:1px;background:#767676;"></div><div style="left:9px;top:88px;width:1px;height:1px;background:#767676;"></div><div style="left:9px;top:90px;width:1px;height:1px;background:#767676;"></div><div style="left:9px;top:92px;width:1px;height:1px;background:#767676;"></div><div style="left:9px;top:94px;width:1px;height:1px;background:#767676;"></div><div style="left:9px;top:96px;width:1px;height:1px;background:#767676;"></div><div style="left:9px;top:98px;width:1px;height:1px;background:#767676;"></div><div style="left:9px;top:100px;width:1px;height:1px;background:#767676;"></div><div style="left:9px;top:102px;width:1px;height:1px;background:#767676;"></div><div style="left:9px;top:104px;width:1px;height:1px;background:#767676;"></div><div style="left:9px;top:106px;width:1px;height:1px;background:#767676;"></div><div style="left:9px;top:108px;width:1px;height:1px;background:#767676;"></div><div style="left:9px;top:110px;width:1px;height:1px;background:#767676;"></div><div style="left:9px;top:112px;width:1px;height:1px;background:#767676;"></div><div style="left:9px;top:114px;width:1px;height:1px;background:#767676;"></div><div style="left:9px;top:116px;width:1px;height:1px;background:#767676;"></div><div style="left:9px;top:118px;width:1px;height:1px;background:#767676;"></div><div style="left:9px;top:120px;width:1px;height:1px;background:#767676;"></div><div style="left:9px;top:122px;width:1px;height:1px;background:#767676;"></div><div style="left:9px;top:124px;width:1px;height:1px;background:#767676;"></div><div style="left:9px;top:126px;width:1px;height:1px;background:#767676;"></div><div style="left:9px;top:128px;width:1px;height:1px;background:#767676;"></div><div style="left:9px;top:130px;width:1px;height:1px;background:#767676;"></div><div style="left:9px;top:132px;width:1px;height:1px;background:#767676;"></div><div style="left:9px;top:134px;width:1px;height:1px;background:#767676;"></div><div style="left:9px;top:136px;width:1px;height:1px;background:#767676;"></div><div style="left:9px;top:138px;width:1px;height:1px;background:#767676;"></div><div style="left:9px;top:140px;width:1px;height:1px;background:#767676;"></div><div style="left:9px;top:142px;width:1px;height:1px;background:#767676;"></div><div style="left:9px;top:144px;width:1px;height:1px;background:#767676;"></div><div style="left:9px;top:146px;width:1px;height:1px;background:#767676;"></div><div style="left:9px;top:148px;width:1px;height:1px;background:#767676;"></div><div style="left:9px;top:150px;width:1px;height:1px;background:#767676;"></div><div style="left:9px;top:152px;width:1px;height:1px;background:#767676;"></div><div style="left:9px;top:154px;width:1px;height:1px;background:#767676;"></div><div style="left:9px;top:156px;width:1px;height:1px;background:#767676;"></div><div style="left:9px;top:158px;width:1px;height:1px;background:#767676;"></div><div style="left:9px;top:160px;width:1px;height:1px;background:#767676;"></div><div style="left:9px;top:162px;width:1px;height:1px;background:#767676;"></div><div style="left:9px;top:164px;width:1px;height:1px;background:#767676;"></div><div style="left:9px;top:166px;width:1px;height:1px;background:#767676;"></div><div style="left:9px;top:168px;width:1px;height:1px;background:#767676;"></div><div style="left:9px;top:170px;width:1px;height:1px;background:#767676;"></div><div style="left:9px;top:172px;width:1px;height:1px;background:#767676;"></div><div style="left:9px;top:174px;width:1px;height:1px;background:#767676;"></div><div style="left:9px;top:176px;width:1px;height:1px;background:#767676;"></div><div style="left:9px;top:178px;width:1px;height:1px;background:#767676;"></div><div style="left:9px;top:180px;width:1px;height:1px;background:#767676;"></div><div style="left:9px;top:182px;width:1px;height:1px;background:#767676;"></div><div style="left:9px;top:184px;width:1px;height:1px;background:#767676;"></div><div style="left:9px;top:186px;width:1px;height:1px;background:#767676;"></div><div style="left:9px;top:188px;width:1px;height:1px;background:#767676;"></div><div style="left:9px;top:190px;width:1px;height:1px;background:#767676;"></div><div style="left:9px;top:192px;width:1px;height:1px;background:#767676;"></div><div style="left:9px;top:194px;width:1px;height:1px;background:#767676;"></div><div style="left:9px;top:196px;width:1px;height:1px;background:#767676;"></div><div style="left:9px;top:198px;width:1px;height:1px;background:#767676;"></div><div style="left:9px;top:200px;width:1px;height:1px;background:#767676;"></div><div style="left:9px;top:202px;width:1px;height:1px;background:#767676;"></div><div style="left:9px;top:204px;width:1px;height:1px;background:#767676;"></div><div style="left:9px;top:206px;width:1px;height:1px;background:#767676;"></div><div style="left:9px;top:208px;width:1px;height:1px;background:#767676;"></div><div style="left:9px;top:210px;width:1px;height:1px;background:#767676;"></div><div style="left:9px;top:212px;width:1px;height:1px;background:#767676;"></div><div style="left:9px;top:214px;width:1px;height:1px;background:#767676;"></div><div style="left:9px;top:216px;width:1px;height:1px;background:#767676;"></div><div style="left:9px;top:218px;width:1px;height:1px;background:#767676;"></div><div style="left:9px;top:220px;width:1px;height:1px;background:#767676;"></div><div style="left:9px;top:222px;width:1px;height:1px;background:#767676;"></div><div style="left:9px;top:224px;width:1px;height:1px;background:#767676;"></div><div style="left:9px;top:226px;width:1px;height:1px;background:#767676;"></div><div style="left:9px;top:228px;width:1px;height:1px;background:#767676;"></div><div style="left:9px;top:230px;width:1px;height:1px;background:#767676;"></div><div style="left:9px;top:232px;width:1px;height:1px;background:#767676;"></div><div style="left:9px;top:234px;width:1px;height:1px;background:#767676;"></div><div style="left:9px;top:236px;width:1px;height:1px;background:#767676;"></div><div style="left:9px;top:238px;width:1px;height:1px;background:#767676;"></div><div style="left:9px;top:240px;width:1px;height:1px;background:#767676;"></div><div style="left:9px;top:242px;width:1px;height:1px;background:#767676;"></div><div style="left:9px;top:244px;width:1px;height:1px;background:#767676;"></div><div style="left:9px;top:246px;width:1px;height:1px;background:#767676;"></div><div style="left:9px;top:248px;width:1px;height:1px;background:#767676;"></div><div style="left:9px;top:250px;width:1px;height:1px;background:#767676;"></div><div style="left:9px;top:252px;width:1px;height:1px;background:#767676;"></div><div style="left:9px;top:254px;width:1px;height:1px;background:#767676;"></div><div style="left:9px;top:256px;width:1px;height:1px;background:#767676;"></div><div style="left:9px;top:258px;width:1px;height:1px;background:#767676;"></div><div style="left:9px;top:260px;width:1px;height:1px;background:#767676;"></div><div style="left:9px;top:262px;width:1px;height:1px;background:#767676;"></div><div style="left:9px;top:264px;width:1px;height:1px;background:#767676;"></div><div style="left:9px;top:266px;width:1px;height:1px;background:#767676;"></div><div style="left:9px;top:268px;width:1px;height:1px;background:#767676;"></div><div style="left:9px;top:270px;width:1px;height:1px;background:#767676;"></div><div style="left:9px;top:272px;width:1px;height:1px;background:#767676;"></div><div style="left:9px;top:274px;width:1px;height:1px;background:#767676;"></div><div style="left:15px;top:8px;width:1px;height:1px;background:#767676;"></div><div style="left:17px;top:8px;width:1px;height:1px;background:#767676;"></div><div style="left:5px;top:4px;width:9px;height:9px;background:#fff;box-sizing:border-box;border:1px solid #727272"></div><div style="left:7px;top:8px;width:5px;height:1px;background:#ff0000;"></div><div style="left:9px;top:6px;width:1px;height:5px;background:#ff0000;"></div><div style="left:21px;top:1.84px;font-size:12px;line-height:12px;color:#ff0000;letter-spacing:0px;white-space:pre;transform:scaleX(0.87);transform-origin:0 0;-webkit-text-stroke:0.08px #ff0000">A-20G</div><div style="left:15px;top:24px;width:1px;height:1px;background:#767676;"></div><div style="left:17px;top:24px;width:1px;height:1px;background:#767676;"></div><div style="left:5px;top:20px;width:9px;height:9px;background:#fff;box-sizing:border-box;border:1px solid #727272"></div><div style="left:7px;top:24px;width:5px;height:1px;background:#ff0000;"></div><div style="left:9px;top:22px;width:1px;height:5px;background:#ff0000;"></div><div style="left:21px;top:17.84px;font-size:12px;line-height:12px;color:#ff0000;letter-spacing:0px;white-space:pre;transform:scaleX(0.87);transform-origin:0 0;-webkit-text-stroke:0.08px #ff0000">A5M4</div><div style="left:15px;top:40px;width:1px;height:1px;background:#767676;"></div><div style="left:17px;top:40px;width:1px;height:1px;background:#767676;"></div><div style="left:5px;top:36px;width:9px;height:9px;background:#fff;box-sizing:border-box;border:1px solid #727272"></div><div style="left:7px;top:40px;width:5px;height:1px;background:#ff0000;"></div><div style="left:9px;top:38px;width:1px;height:5px;background:#ff0000;"></div><div style="left:21px;top:33.84px;font-size:12px;line-height:12px;color:#ff0000;letter-spacing:0px;white-space:pre;transform:scaleX(0.87);transform-origin:0 0;-webkit-text-stroke:0.08px #ff0000">A6M2-21</div><div style="left:15px;top:56px;width:1px;height:1px;background:#767676;"></div><div style="left:17px;top:56px;width:1px;height:1px;background:#767676;"></div><div style="left:5px;top:52px;width:9px;height:9px;background:#fff;box-sizing:border-box;border:1px solid #727272"></div><div style="left:7px;top:56px;width:5px;height:1px;background:#ff0000;"></div><div style="left:9px;top:54px;width:1px;height:5px;background:#ff0000;"></div><div style="left:21px;top:49.84px;font-size:12px;line-height:12px;color:#ff0000;letter-spacing:0px;white-space:pre;transform:scaleX(0.87);transform-origin:0 0;-webkit-text-stroke:0.08px #ff0000">A6M2N</div><div style="left:15px;top:72px;width:1px;height:1px;background:#767676;"></div><div style="left:17px;top:72px;width:1px;height:1px;background:#767676;"></div><div style="left:5px;top:68px;width:9px;height:9px;background:#fff;box-sizing:border-box;border:1px solid #727272"></div><div style="left:7px;top:72px;width:5px;height:1px;background:#ff0000;"></div><div style="left:9px;top:70px;width:1px;height:5px;background:#ff0000;"></div><div style="left:21px;top:65.84px;font-size:12px;line-height:12px;color:#ff0000;letter-spacing:0px;white-space:pre;transform:scaleX(0.87);transform-origin:0 0;-webkit-text-stroke:0.08px #ff0000">A6M2</div><div style="left:15px;top:88px;width:1px;height:1px;background:#767676;"></div><div style="left:17px;top:88px;width:1px;height:1px;background:#767676;"></div><div style="left:5px;top:84px;width:9px;height:9px;background:#fff;box-sizing:border-box;border:1px solid #727272"></div><div style="left:7px;top:88px;width:5px;height:1px;background:#ff0000;"></div><div style="left:9px;top:86px;width:1px;height:5px;background:#ff0000;"></div><div style="left:21px;top:81.84px;font-size:12px;line-height:12px;color:#ff0000;letter-spacing:0px;white-space:pre;transform:scaleX(0.87);transform-origin:0 0;-webkit-text-stroke:0.08px #ff0000">A6M3</div><div style="left:15px;top:104px;width:1px;height:1px;background:#767676;"></div><div style="left:17px;top:104px;width:1px;height:1px;background:#767676;"></div><div style="left:5px;top:100px;width:9px;height:9px;background:#fff;box-sizing:border-box;border:1px solid #727272"></div><div style="left:7px;top:104px;width:5px;height:1px;background:#ff0000;"></div><div style="left:9px;top:102px;width:1px;height:5px;background:#ff0000;"></div><div style="left:21px;top:97.84px;font-size:12px;line-height:12px;color:#ff0000;letter-spacing:0px;white-space:pre;transform:scaleX(0.87);transform-origin:0 0;-webkit-text-stroke:0.08px #ff0000">A6M5a</div><div style="left:15px;top:120px;width:1px;height:1px;background:#767676;"></div><div style="left:17px;top:120px;width:1px;height:1px;background:#767676;"></div><div style="left:5px;top:116px;width:9px;height:9px;background:#fff;box-sizing:border-box;border:1px solid #727272"></div><div style="left:7px;top:120px;width:5px;height:1px;background:#ff0000;"></div><div style="left:9px;top:118px;width:1px;height:5px;background:#ff0000;"></div><div style="left:21px;top:113.84px;font-size:12px;line-height:12px;color:#ff0000;letter-spacing:0px;white-space:pre;transform:scaleX(0.87);transform-origin:0 0;-webkit-text-stroke:0.08px #ff0000">A6M5b</div><div style="left:15px;top:136px;width:1px;height:1px;background:#767676;"></div><div style="left:17px;top:136px;width:1px;height:1px;background:#767676;"></div><div style="left:5px;top:132px;width:9px;height:9px;background:#fff;box-sizing:border-box;border:1px solid #727272"></div><div style="left:7px;top:136px;width:5px;height:1px;background:#ff0000;"></div><div style="left:9px;top:134px;width:1px;height:5px;background:#ff0000;"></div><div style="left:21px;top:129.84px;font-size:12px;line-height:12px;color:#ff0000;letter-spacing:0px;white-space:pre;transform:scaleX(0.87);transform-origin:0 0;-webkit-text-stroke:0.08px #ff0000">A6M5c</div><div style="left:15px;top:152px;width:1px;height:1px;background:#767676;"></div><div style="left:17px;top:152px;width:1px;height:1px;background:#767676;"></div><div style="left:5px;top:148px;width:9px;height:9px;background:#fff;box-sizing:border-box;border:1px solid #727272"></div><div style="left:7px;top:152px;width:5px;height:1px;background:#ff0000;"></div><div style="left:9px;top:150px;width:1px;height:5px;background:#ff0000;"></div><div style="left:21px;top:145.84px;font-size:12px;line-height:12px;color:#ff0000;letter-spacing:0px;white-space:pre;transform:scaleX(0.87);transform-origin:0 0;-webkit-text-stroke:0.08px #ff0000">A6M7_Model62</div><div style="left:15px;top:168px;width:1px;height:1px;background:#767676;"></div><div style="left:17px;top:168px;width:1px;height:1px;background:#767676;"></div><div style="left:5px;top:164px;width:9px;height:9px;background:#fff;box-sizing:border-box;border:1px solid #727272"></div><div style="left:7px;top:168px;width:5px;height:1px;background:#ff0000;"></div><div style="left:9px;top:166px;width:1px;height:5px;background:#ff0000;"></div><div style="left:21px;top:161.84px;font-size:12px;line-height:12px;color:#ff0000;letter-spacing:0px;white-space:pre;transform:scaleX(0.87);transform-origin:0 0;-webkit-text-stroke:0.08px #ff0000">A6M7_Model63</div><div style="left:15px;top:184px;width:1px;height:1px;background:#767676;"></div><div style="left:17px;top:184px;width:1px;height:1px;background:#767676;"></div><div style="left:5px;top:180px;width:9px;height:9px;background:#fff;box-sizing:border-box;border:1px solid #727272"></div><div style="left:7px;top:184px;width:5px;height:1px;background:#ff0000;"></div><div style="left:9px;top:182px;width:1px;height:5px;background:#ff0000;"></div><div style="left:21px;top:177.84px;font-size:12px;line-height:12px;color:#ff0000;letter-spacing:0px;white-space:pre;transform:scaleX(0.87);transform-origin:0 0;-webkit-text-stroke:0.08px #ff0000">Ar-234B-2</div><div style="left:15px;top:200px;width:1px;height:1px;background:#767676;"></div><div style="left:17px;top:200px;width:1px;height:1px;background:#767676;"></div><div style="left:5px;top:196px;width:9px;height:9px;background:#fff;box-sizing:border-box;border:1px solid #727272"></div><div style="left:7px;top:200px;width:5px;height:1px;background:#ff0000;"></div><div style="left:9px;top:198px;width:1px;height:5px;background:#ff0000;"></div><div style="left:21px;top:193.84px;font-size:12px;line-height:12px;color:#ff0000;letter-spacing:0px;white-space:pre;transform:scaleX(0.87);transform-origin:0 0;-webkit-text-stroke:0.08px #ff0000">B-25J</div><div style="left:15px;top:216px;width:1px;height:1px;background:#767676;"></div><div style="left:17px;top:216px;width:1px;height:1px;background:#767676;"></div><div style="left:5px;top:212px;width:9px;height:9px;background:#fff;box-sizing:border-box;border:1px solid #727272"></div><div style="left:7px;top:216px;width:5px;height:1px;background:#ff0000;"></div><div style="left:9px;top:214px;width:1px;height:5px;background:#ff0000;"></div><div style="left:21px;top:209.84px;font-size:12px;line-height:12px;color:#ff0000;letter-spacing:0px;white-space:pre;transform:scaleX(0.87);transform-origin:0 0;-webkit-text-stroke:0.08px #ff0000">B5N2</div><div style="left:15px;top:232px;width:1px;height:1px;background:#767676;"></div><div style="left:17px;top:232px;width:1px;height:1px;background:#767676;"></div><div style="left:5px;top:228px;width:9px;height:9px;background:#fff;box-sizing:border-box;border:1px solid #727272"></div><div style="left:7px;top:232px;width:5px;height:1px;background:#ff0000;"></div><div style="left:9px;top:230px;width:1px;height:5px;background:#ff0000;"></div><div style="left:21px;top:225.84px;font-size:12px;line-height:12px;color:#ff0000;letter-spacing:0px;white-space:pre;transform:scaleX(0.87);transform-origin:0 0;-webkit-text-stroke:0.08px #ff0000">B6N2</div><div style="left:15px;top:248px;width:1px;height:1px;background:#767676;"></div><div style="left:17px;top:248px;width:1px;height:1px;background:#767676;"></div><div style="left:5px;top:244px;width:9px;height:9px;background:#fff;box-sizing:border-box;border:1px solid #727272"></div><div style="left:7px;top:248px;width:5px;height:1px;background:#ff0000;"></div><div style="left:9px;top:246px;width:1px;height:5px;background:#ff0000;"></div><div style="left:21px;top:241.84px;font-size:12px;line-height:12px;color:#ff0000;letter-spacing:0px;white-space:pre;transform:scaleX(0.87);transform-origin:0 0;-webkit-text-stroke:0.08px #ff0000">BeaufighterMk21</div><div style="left:15px;top:264px;width:1px;height:1px;background:#767676;"></div><div style="left:17px;top:264px;width:1px;height:1px;background:#767676;"></div><div style="left:5px;top:260px;width:9px;height:9px;background:#fff;box-sizing:border-box;border:1px solid #727272"></div><div style="left:7px;top:264px;width:5px;height:1px;background:#ff0000;"></div><div style="left:9px;top:262px;width:1px;height:5px;background:#ff0000;"></div><div style="left:21px;top:257.84px;font-size:12px;line-height:12px;color:#ff0000;letter-spacing:0px;white-space:pre;transform:scaleX(0.87);transform-origin:0 0;-webkit-text-stroke:0.08px #ff0000">Bf-109E-4B</div><div style="left:15px;top:280px;width:1px;height:1px;background:#767676;"></div><div style="left:17px;top:280px;width:1px;height:1px;background:#767676;"></div><div style="left:5px;top:276px;width:9px;height:9px;background:#fff;box-sizing:border-box;border:1px solid #727272"></div><div style="left:7px;top:280px;width:5px;height:1px;background:#ff0000;"></div><div style="left:9px;top:278px;width:1px;height:5px;background:#ff0000;"></div><div style="left:21px;top:273.84px;font-size:12px;line-height:12px;color:#ff0000;letter-spacing:0px;white-space:pre;transform:scaleX(0.87);transform-origin:0 0;-webkit-text-stroke:0.08px #ff0000">Bf-109E-4</div><div style="left:201px;top:0px;width:16px;height:275px;background:#f0f0f0;"></div><div style="left:201px;top:17px;width:15px;height:18px;background:#cdcdcd;"></div></div><svg style="left:0;top:0" width="833" height="643"><path d="M210.3 357.1 L213.6 353.5 L216.9 357.1" fill="none" stroke="#606060" stroke-width="1.7"/><path d="M210.3 609.6 L213.6 613.2 L216.9 609.6" fill="none" stroke="#606060" stroke-width="1.7"/></svg><div style="left:230px;top:61px;width:600px;height:1px;background:#a0a0a0;"></div><div style="left:230px;top:61px;width:1px;height:559px;background:#a0a0a0;"></div><div style="left:231px;top:62px;width:598px;height:1px;background:#ffffff;"></div><div style="left:231px;top:62px;width:1px;height:557px;background:#ffffff;"></div><div style="left:829px;top:62px;width:1px;height:559px;background:#696969;"></div><div style="left:230px;top:620px;width:600px;height:1px;background:#696969;"></div><div style="left:828px;top:63px;width:1px;height:556px;background:#a0a0a0;"></div><div style="left:231px;top:619px;width:598px;height:1px;background:#a0a0a0;"></div><div style="left:830px;top:31px;width:2px;height:591px;background:#ffffff;"></div><div style="left:1px;top:621px;width:830px;height:1px;background:#ffffff;"></div><div style="left:1px;top:622px;width:831px;height:1px;background:#a0a0a0;"></div><div style="left:1px;top:623px;width:831px;height:2px;background:#fafafa;"></div><div style="left:231px;top:83px;width:598px;height:1px;background:#ffffff;"></div><div style="left:232px;top:84px;width:1px;height:535px;background:#e6e6e6;"></div><div style="left:823px;top:84px;width:5px;height:534px;background:#fbfbfb;"></div><div style="left:236px;top:614px;width:592px;height:5px;background:#fbfbfb;"></div><div style="left:234px;top:65px;width:86px;height:17px;background:#f0f0f0;"></div><div style="left:234px;top:65px;width:85px;height:1px;background:#ffffff;"></div><div style="left:234px;top:65px;width:1px;height:17px;background:#ffffff;"></div><div style="left:319px;top:66px;width:1px;height:16px;background:#696969;"></div><div style="left:318px;top:66px;width:1px;height:16px;background:#a0a0a0;"></div><div style="left:239.2px;top:67.84px;font-size:12px;line-height:12px;color:#000;letter-spacing:0px;font-weight:normal;font-style:normal;white-space:pre;transform:scaleX(0.845);transform-origin:0 0;-webkit-text-stroke:0.08px #000">Common Charts</div><div style="left:427px;top:65px;width:113px;height:17px;background:#f0f0f0;"></div><div style="left:427px;top:65px;width:112px;height:1px;background:#ffffff;"></div><div style="left:427px;top:65px;width:1px;height:17px;background:#ffffff;"></div><div style="left:539px;top:66px;width:1px;height:16px;background:#696969;"></div><div style="left:538px;top:66px;width:1px;height:16px;background:#a0a0a0;"></div><div style="left:433.2px;top:67.84px;font-size:12px;line-height:12px;color:#000;letter-spacing:0px;font-weight:normal;font-style:normal;white-space:pre;transform:scaleX(0.88);transform-origin:0 0;-webkit-text-stroke:0.08px #000">MAX ROC by Altitude</div><div style="left:540px;top:65px;width:157px;height:17px;background:#f0f0f0;"></div><div style="left:540px;top:65px;width:156px;height:1px;background:#ffffff;"></div><div style="left:540px;top:65px;width:1px;height:17px;background:#ffffff;"></div><div style="left:696px;top:66px;width:1px;height:16px;background:#696969;"></div><div style="left:695px;top:66px;width:1px;height:16px;background:#a0a0a0;"></div><div style="left:546.0px;top:67.84px;font-size:12px;line-height:12px;color:#000;letter-spacing:0px;font-weight:normal;font-style:normal;white-space:pre;transform:scaleX(0.88);transform-origin:0 0;-webkit-text-stroke:0.08px #000">ROC at Constant TAS (Alt=0m)</div><div style="left:697px;top:65px;width:99px;height:17px;overflow:hidden"><div style="left:0;top:0;width:200px;height:17px;background:#f0f0f0;border-top:1px solid #fff;border-left:1px solid #fff;box-sizing:border-box"></div><div style="left:6.8px;top:2.84px;font-size:12px;line-height:12px;white-space:pre;color:#000;transform:scaleX(0.88);transform-origin:0 0;-webkit-text-stroke:0.08px #000">Turn by speed (Alt=0m)</div></div><div style="left:318px;top:63px;width:111px;height:21px;background:#f0f0f0;"></div><div style="left:318px;top:63px;width:110px;height:1px;background:#ffffff;"></div><div style="left:318px;top:63px;width:1px;height:21px;background:#ffffff;"></div><div style="left:428px;top:64px;width:1px;height:20px;background:#696969;"></div><div style="left:427px;top:64px;width:1px;height:20px;background:#a0a0a0;"></div><div style="left:325.3px;top:65.94px;font-size:12px;line-height:12px;color:#000;letter-spacing:0px;font-weight:normal;font-style:normal;white-space:pre;transform:scaleX(0.89);transform-origin:0 0;-webkit-text-stroke:0.08px #000">Max TAS by Altitude</div><div style="left:796px;top:63px;width:17px;height:17px;box-sizing:border-box;background:#f0f0f0;border-top:1px solid #fff;border-left:1px solid #fff;border-right:1px solid #696969;border-bottom:1px solid #696969"></div><div style="left:810px;top:64px;width:1px;height:15px;background:#a0a0a0"></div><div style="left:797px;top:78px;width:15px;height:1px;background:#a0a0a0"></div><div style="left:813px;top:63px;width:17px;height:17px;box-sizing:border-box;background:#f0f0f0;border-top:1px solid #fff;border-left:1px solid #fff;border-right:1px solid #696969;border-bottom:1px solid #696969"></div><div style="left:827px;top:64px;width:1px;height:15px;background:#a0a0a0"></div><div style="left:814px;top:78px;width:15px;height:1px;background:#a0a0a0"></div><div style="left:801px;top:72px;width:1px;height:1px;background:#000;"></div><div style="left:823px;top:72px;width:1px;height:1px;background:#000;"></div><div style="left:802px;top:71px;width:1px;height:3px;background:#000;"></div><div style="left:822px;top:71px;width:1px;height:3px;background:#000;"></div><div style="left:803px;top:70px;width:1px;height:5px;background:#000;"></div><div style="left:821px;top:70px;width:1px;height:5px;background:#000;"></div><div style="left:804px;top:69px;width:1px;height:7px;background:#000;"></div><div style="left:820px;top:69px;width:1px;height:7px;background:#000;"></div><div style="left:235px;top:86px;width:588px;height:1px;background:#a0a0a0;"></div><div style="left:235px;top:86px;width:1px;height:528px;background:#a0a0a0;"></div><div style="left:236px;top:87px;width:2px;height:526px;background:#ffffff;"></div><div style="left:236px;top:87px;width:586px;height:2px;background:#ffffff;"></div><div style="left:822px;top:87px;width:1px;height:527px;background:#a0a0a0;"></div><div style="left:235px;top:613px;width:588px;height:1px;background:#a0a0a0;"></div><svg style="left:0;top:0" width="833" height="643" viewBox="0 0 833 643"><defs><clipPath id="pc"><rect x="312" y="133" width="493" height="400"/></clipPath></defs><path d="M312 514.5H805 M312 494.5H805 M312 474.5H805 M312 454.5H805 M312 434.5H805 M312 413.5H805 M312 393.5H805 M312 373.5H805 M312 353.5H805 M312 333.5H805 M312 313.5H805 M312 293.5H805 M312 273.5H805 M312 253.5H805 M312 233.5H805 M312 212.5H805 M312 192.5H805 M312 172.5H805 M312 152.5H805 M345.5 133V533 M396.5 133V533 M448.5 133V533 M500.5 133V533 M552.5 133V533 M603.5 133V533 M655.5 133V533 M707.5 133V533 M758.5 133V533" stroke="#787878" stroke-width="1" stroke-dasharray="3 3" fill="none"/><path d="M307 534.5H310 M309 529.5H310 M309 524.5H310 M309 519.5H310 M307 514.5H310 M309 509.5H310 M309 504.5H310 M309 499.5H310 M307 494.5H310 M309 489.5H310 M309 484.5H310 M309 479.5H310 M307 474.5H310 M309 469.5H310 M309 464.5H310 M309 459.5H310 M307 454.5H310 M309 449.5H310 M309 444.5H310 M309 439.5H310 M307 434.5H310 M309 428.5H310 M309 423.5H310 M309 418.5H310 M307 413.5H310 M309 408.5H310 M309 403.5H310 M309 398.5H310 M307 393.5H310 M309 388.5H310 M309 383.5H310 M309 378.5H310 M307 373.5H310 M309 368.5H310 M309 363.5H310 M309 358.5H310 M307 353.5H310 M309 348.5H310 M309 343.5H310 M309 338.5H310 M307 333.5H310 M309 328.5H310 M309 323.5H310 M309 318.5H310 M307 313.5H310 M309 308.5H310 M309 303.5H310 M309 298.5H310 M307 293.5H310 M309 288.5H310 M309 283.5H310 M309 278.5H310 M307 273.5H310 M309 268.5H310 M309 263.5H310 M309 258.5H310 M307 253.5H310 M309 248.5H310 M309 243.5H310 M309 238.5H310 M307 233.5H310 M309 227.5H310 M309 222.5H310 M309 217.5H310 M307 212.5H310 M309 207.5H310 M309 202.5H310 M309 197.5H310 M307 192.5H310 M309 187.5H310 M309 182.5H310 M309 177.5H310 M307 172.5H310 M309 167.5H310 M309 162.5H310 M309 157.5H310 M307 152.5H310 M309 147.5H310 M309 142.5H310 M309 137.5H310 M307 132.5H310 M319.5 535V537 M332.5 535V537 M345.5 535V539 M358.5 535V537 M371.5 535V537 M383.5 535V537 M396.5 535V539 M409.5 535V537 M422.5 535V537 M435.5 535V537 M448.5 535V539 M461.5 535V537 M474.5 535V537 M487.5 535V537 M500.5 535V539 M513.5 535V537 M526.5 535V537 M539.5 535V537 M552.5 535V539 M564.5 535V537 M577.5 535V537 M590.5 535V537 M603.5 535V539 M616.5 535V537 M629.5 535V537 M642.5 535V537 M655.5 535V539 M668.5 535V537 M681.5 535V537 M694.5 535V537 M707.5 535V539 M720.5 535V537 M732.5 535V537 M745.5 535V537 M758.5 535V539 M771.5 535V537 M784.5 535V537 M797.5 535V537" stroke="#505050" stroke-width="1" fill="none"/><rect x="310" y="132" width="2" height="403" fill="#000"/><rect x="310" y="533" width="496" height="2" fill="#000"/><rect x="310" y="132" width="496" height="1" fill="#000"/><rect x="805" y="132" width="1" height="403" fill="#000"/><polyline points="537.7,533.5 545.4,524.3 555.0,514.7 560.7,509.0 570.3,499.4 578.0,493.6 587.6,483.0 597.2,474.4 604.9,467.7 611.8,460.5 616.8,453.8 625.2,447.1 629.4,441.2 638.7,434.5 643.7,427.7 652.1,421.8 657.1,416.0 663.9,410.9 664.7,405.0 662.2,400.0 655.9,394.8 653.0,388.3 658.7,381.8 668.8,376.0 674.6,371.7 687.6,365.9 693.3,361.6 703.4,355.9 712.0,350.8 722.1,345.8 730.8,340.0 742.4,332.3 756.1,325.4 766.1,317.3 757.3,311.1 749.9,304.9 739.9,297.4 732.4,291.8 725.0,285.5 716.4,280.5 706.3,272.6 693.3,266.1 683.2,260.3 671.7,253.1 660.0,249.3 657.0,247.8 654.0,246.4 651.0,244.9 648.0,243.5 645.0,242.1 642.0,240.7 639.0,239.4 636.0,238.0 633.0,236.7 630.0,235.4 627.0,234.2 624.0,233.0 621.0,231.7 618.0,230.5 615.0,229.4 612.0,228.2 609.0,227.1 606.0,226.0 603.0,224.9 600.0,223.8 597.0,222.8 594.0,221.7 591.0,220.7 588.0,219.7 585.0,218.8 582.0,217.8 579.0,216.9 576.0,216.0 573.0,215.1 570.0,214.2 567.0,213.3 564.0,212.5 561.0,211.7 558.0,210.8 555.0,210.1 552.0,209.3 549.0,208.5 546.0,207.8 543.0,207.0 540.0,206.3 537.0,205.6 534.0,204.9 531.0,204.3 528.0,203.6 525.0,203.0 522.0,202.4 519.0,201.7 516.0,201.1 513.0,200.6 510.0,200.0 507.0,199.4 504.0,198.9 501.0,198.3 498.0,197.8 495.0,197.3 492.0,196.8 489.0,196.3 486.0,195.9 483.0,195.4 480.0,194.9 477.0,194.5 474.0,194.1 471.0,193.6 468.0,193.2 465.0,192.8 462.0,192.4 459.0,192.0 456.0,191.7 453.0,191.3 450.0,190.9 447.0,190.6 444.0,190.3 441.0,189.9 438.0,189.6 435.0,189.3 432.0,189.0 429.0,188.7 426.0,188.4 423.0,188.1 420.0,187.8 417.0,187.5 414.0,187.3 411.0,187.0 408.0,186.7 405.0,186.5 402.0,186.2 399.0,186.0 396.0,185.7 393.0,185.5 390.0,185.3 387.0,185.1 384.0,184.8 381.0,184.6 378.0,184.4 375.0,184.2 372.0,184.0 369.0,183.8 366.0,183.6 363.0,183.4 360.0,183.2 357.0,183.0 354.0,182.8 351.0,182.6 348.0,182.4 345.0,182.2 342.0,182.0 339.0,181.8 336.0,181.6 333.0,181.5 330.0,181.3 327.0,181.1 324.0,180.9 321.0,180.7 318.0,180.5 315.0,180.3 312.0,180.1 373.0,132.0" fill="none" stroke="#0000ff" stroke-width="2.1" stroke-linejoin="round" clip-path="url(#pc)"/><polyline points="615.5,533.5 622.2,524.3 633.7,513.8 645.3,505.1 654.9,494.6 668.3,483.0 676.0,475.4 685.7,465.5 694.1,458.8 700.8,452.1 710.9,444.5 716.8,438.7 712.6,431.1 707.6,426.1 702.5,419.3 699.2,411.8 702.5,406.7 716.0,400.0 720.7,396.9 729.3,390.4 740.9,386.1 749.5,380.3 760.0,373.9 773.7,366.8 784.7,359.7 794.7,354.7 804.7,349.7 804.7,346.0 802.2,338.5 799.7,329.8 795.9,323.6 794.7,317.3 789.7,313.6 784.7,308.6 781.0,303.7 772.3,297.4 763.6,291.2 756.1,285.0 747.0,280.5 740.9,274.8 732.2,269.0 719.3,261.8 707.7,254.6 694.8,248.1 683.2,241.6 671.7,237.3 663.1,232.6 660.1,231.4 657.1,230.2 654.1,229.0 651.1,227.9 648.1,226.7 645.1,225.6 642.1,224.5 639.1,223.3 636.1,222.3 633.1,221.2 630.1,220.1 627.1,219.1 624.1,218.0 621.1,217.0 618.1,216.0 615.1,215.0 612.1,214.0 609.1,213.1 606.1,212.1 603.1,211.2 600.1,210.3 597.1,209.4 594.1,208.5 591.1,207.6 588.1,206.7 585.1,205.9 582.1,205.0 579.1,204.2 576.1,203.4 573.1,202.6 570.1,201.8 567.1,201.1 564.1,200.3 561.1,199.6 558.1,198.8 555.1,198.1 552.1,197.4 549.1,196.7 546.1,196.1 543.1,195.4 540.1,194.7 537.1,194.1 534.1,193.5 531.1,192.9 528.1,192.3 525.1,191.7 522.1,191.1 519.1,190.6 516.1,190.0 513.1,189.5 510.1,188.9 507.1,188.4 504.1,187.9 501.1,187.4 498.1,187.0 495.1,186.5 492.1,186.0 489.1,185.6 486.1,185.2 483.1,184.7 480.1,184.3 477.1,183.9 474.1,183.5 471.1,183.1 468.1,182.8 465.1,182.4 462.1,182.0 459.1,181.7 456.1,181.4 453.1,181.0 450.1,180.7 447.1,180.4 444.1,180.1 441.1,179.8 438.1,179.5 435.1,179.2 432.1,179.0 429.1,178.7 426.1,178.5 423.1,178.2 420.1,178.0 417.1,177.7 414.1,177.5 411.1,177.3 408.1,177.1 405.1,176.8 402.1,176.6 399.1,176.4 396.1,176.2 393.1,176.0 390.1,175.9 387.1,175.7 384.1,175.5 381.1,175.3 378.1,175.1 375.1,175.0 372.1,174.8 369.1,174.6 366.1,174.5 363.1,174.3 360.1,174.1 357.1,174.0 354.1,173.8 351.1,173.7 348.1,173.5 345.1,173.3 342.1,173.2 339.1,173.0 336.1,172.9 333.1,172.7 330.1,172.5 327.1,172.4 325.0,172.3 376.0,132.0" fill="none" stroke="#0a3d78" stroke-width="2.1" stroke-linejoin="round" clip-path="url(#pc)"/><text x="303.5" y="537.9" text-anchor="end" font-size="11" letter-spacing="-0.35" fill="#000">0</text><text x="303.5" y="517.8" text-anchor="end" font-size="11" letter-spacing="-0.35" fill="#000">500</text><text x="303.5" y="497.7" text-anchor="end" font-size="11" letter-spacing="-0.35" fill="#000">1 000</text><text x="303.5" y="477.6" text-anchor="end" font-size="11" letter-spacing="-0.35" fill="#000">1 500</text><text x="303.5" y="457.5" text-anchor="end" font-size="11" letter-spacing="-0.35" fill="#000">2 000</text><text x="303.5" y="437.4" text-anchor="end" font-size="11" letter-spacing="-0.35" fill="#000">2 500</text><text x="303.5" y="417.3" text-anchor="end" font-size="11" letter-spacing="-0.35" fill="#000">3 000</text><text x="303.5" y="397.2" text-anchor="end" font-size="11" letter-spacing="-0.35" fill="#000">3 500</text><text x="303.5" y="377.1" text-anchor="end" font-size="11" letter-spacing="-0.35" fill="#000">4 000</text><text x="303.5" y="357.0" text-anchor="end" font-size="11" letter-spacing="-0.35" fill="#000">4 500</text><text x="303.5" y="336.9" text-anchor="end" font-size="11" letter-spacing="-0.35" fill="#000">5 000</text><text x="303.5" y="316.8" text-anchor="end" font-size="11" letter-spacing="-0.35" fill="#000">5 500</text><text x="303.5" y="296.7" text-anchor="end" font-size="11" letter-spacing="-0.35" fill="#000">6 000</text><text x="303.5" y="276.6" text-anchor="end" font-size="11" letter-spacing="-0.35" fill="#000">6 500</text><text x="303.5" y="256.5" text-anchor="end" font-size="11" letter-spacing="-0.35" fill="#000">7 000</text><text x="303.5" y="236.4" text-anchor="end" font-size="11" letter-spacing="-0.35" fill="#000">7 500</text><text x="303.5" y="216.3" text-anchor="end" font-size="11" letter-spacing="-0.35" fill="#000">8 000</text><text x="303.5" y="196.2" text-anchor="end" font-size="11" letter-spacing="-0.35" fill="#000">8 500</text><text x="303.5" y="176.1" text-anchor="end" font-size="11" letter-spacing="-0.35" fill="#000">9 000</text><text x="303.5" y="156.0" text-anchor="end" font-size="11" letter-spacing="-0.35" fill="#000">9 500</text><text x="303.5" y="135.9" text-anchor="end" font-size="11" letter-spacing="-0.35" fill="#000">10 000</text><text x="345.5" y="552" text-anchor="middle" font-size="11" letter-spacing="-0.45" fill="#000">380</text><text x="397.2" y="552" text-anchor="middle" font-size="11" letter-spacing="-0.45" fill="#000">400</text><text x="448.9" y="552" text-anchor="middle" font-size="11" letter-spacing="-0.45" fill="#000">420</text><text x="500.6" y="552" text-anchor="middle" font-size="11" letter-spacing="-0.45" fill="#000">440</text><text x="552.3" y="552" text-anchor="middle" font-size="11" letter-spacing="-0.45" fill="#000">460</text><text x="604.0" y="552" text-anchor="middle" font-size="11" letter-spacing="-0.45" fill="#000">480</text><text x="655.7" y="552" text-anchor="middle" font-size="11" letter-spacing="-0.45" fill="#000">500</text><text x="707.4" y="552" text-anchor="middle" font-size="11" letter-spacing="-0.45" fill="#000">520</text><text x="759.1" y="552" text-anchor="middle" font-size="11" letter-spacing="-0.45" fill="#000">540</text><text x="557.5" y="563.5" text-anchor="middle" font-size="10" letter-spacing="-0.3" fill="#000">speed (km/h)</text><text transform="translate(264.8 333) rotate(-90)" text-anchor="middle" font-size="9.5" letter-spacing="-0.05" fill="#000">altitude (m)</text><text x="531" y="122.5" text-anchor="middle" font-size="11.6" font-weight="bold" font-style="italic" fill="#2020e6">Max TAS by Altitude</text><rect x="437" y="577" width="257" height="15" fill="#000"/><rect x="434.5" y="574.5" width="257" height="15" fill="#fff" stroke="#000" stroke-width="1"/><rect x="440" y="581" width="21" height="2" fill="#0000ff"/><rect x="564" y="581" width="21" height="2" fill="#0a3d78"/><text x="464.5" y="585" font-size="9.6" letter-spacing="-0.3" fill="#000">100% Mosquito-BMkIV</text><text x="588" y="585" font-size="9.6" letter-spacing="-0.3" fill="#000">MAX Mosquito-BMkIV</text></svg><div style="left:1px;top:625px;width:199px;height:1px;background:#a0a0a0;"></div><div style="left:1px;top:625px;width:1px;height:17px;background:#a0a0a0;"></div><div style="left:203px;top:625px;width:197px;height:1px;background:#a0a0a0;"></div><div style="left:203px;top:625px;width:1px;height:17px;background:#a0a0a0;"></div><div style="left:403px;top:625px;width:429px;height:1px;background:#a0a0a0;"></div><div style="left:403px;top:625px;width:1px;height:17px;background:#a0a0a0;"></div><div style="left:4px;top:627.84px;font-size:12px;line-height:12px;color:#000;letter-spacing:-0.25px;font-weight:normal;font-style:normal;white-space:pre;">crafts loaded: 230</div><svg style="left:818px;top:628px" width="14" height="14"><path d="M13 2 L2 13 M13 6 L6 13 M13 10 L10 13" stroke="#a0a0a0" stroke-width="1.3"/></svg>
</body></html>
